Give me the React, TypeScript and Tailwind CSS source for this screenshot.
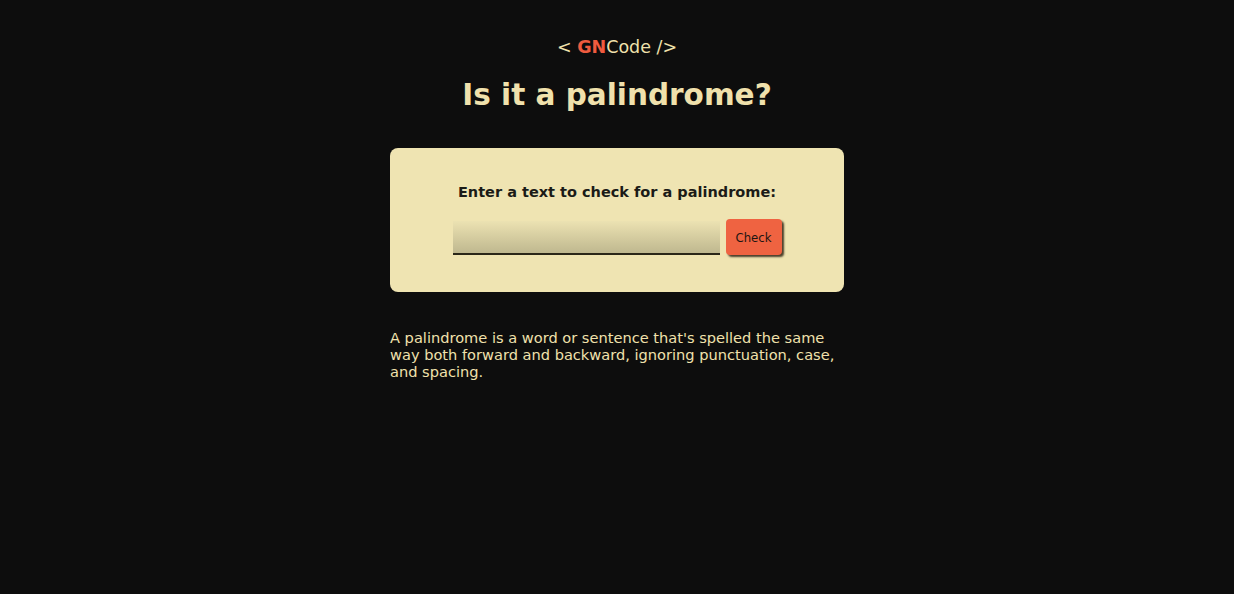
import React, { useState } from 'react';

export default function App() {
  const [text, setText] = useState('');

  return (
    <div className="min-h-[594px] w-full bg-[#0d0d0d] font-['DejaVu_Sans',Verdana,sans-serif] text-[#f0e1ac]">
      <main className="mx-auto flex w-[454px] flex-col items-center pt-[36px]">
        <p className="text-[17.5px] leading-[22px]">
          &lt; <span className="font-bold text-[#ef5b3f]">GN</span>Code /&gt;
        </p>
        <h1 className="mt-[20px] text-[29.5px] font-bold leading-[34px]">Is it a palindrome?</h1>

        <div className="mt-[36px] flex h-[144px] w-full flex-col items-center rounded-[8px] bg-[#efe4b2] pt-[34px]">
          <label htmlFor="text-input" className="text-[14.5px] font-bold leading-[20px] text-[#1b1b17]">
            Enter a text to check for a palindrome:
          </label>
          <div className="mt-[17px] flex items-end gap-[6px]">
            <input
              id="text-input"
              value={text}
              onChange={(e) => setText(e.target.value)}
              className="h-[34px] w-[267px] border-b-2 border-[#2a2718] bg-gradient-to-b from-[#ece2b2] to-[#bfb88f] px-2 text-[14px] text-[#1b1b17] outline-none"
            />
            <button className="h-[36px] w-[56px] rounded-[4px] bg-[#ef6341] text-[13px] leading-none text-[#1c1512] shadow-[2px_2px_2px_#4a3e2a] font-['DejaVu_Sans_Condensed',Tahoma,sans-serif]">
              Check
            </button>
          </div>
        </div>

        <p className="mt-[37px] w-full text-[14.6px] leading-[17px]">
          A palindrome is a word or sentence that's spelled the same way both forward and backward, ignoring punctuation, case, and spacing.
        </p>
      </main>
    </div>
  );
}
